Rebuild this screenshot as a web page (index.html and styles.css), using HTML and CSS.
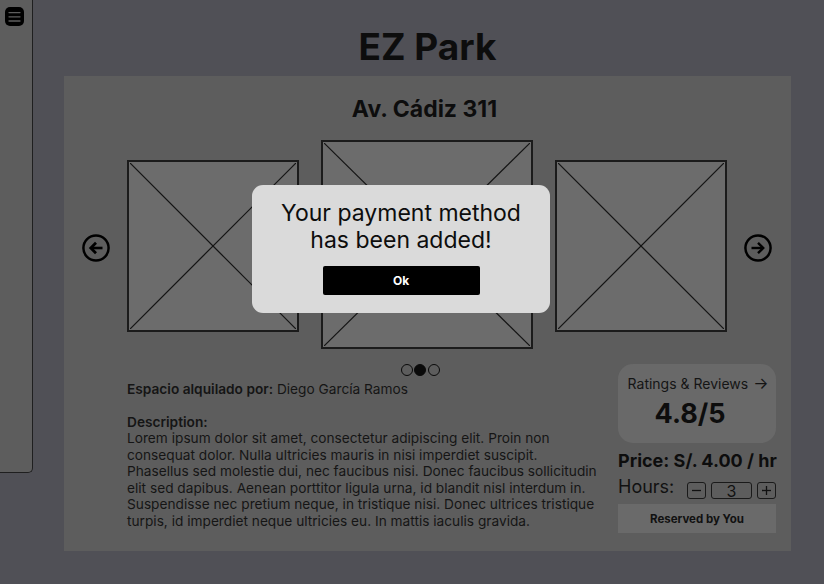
FILE: index.html
```html
<!DOCTYPE html>
<html lang="es">
<head>
<meta charset="utf-8">
<title>EZ Park</title>
<link rel="stylesheet" href="styles.css">
</head>
<body>
<div class="app">
  <aside class="sidebar">
    <button class="menu-btn" aria-label="Menu">
      <svg width="19" height="19" viewBox="0 0 19 19"><rect x="0" y="0" width="19" height="19" rx="5" fill="#000"/><g stroke="#5d5d5d" stroke-width="1.3" stroke-linecap="round"><line x1="4" y1="5.6" x2="15" y2="5.6"/><line x1="4" y1="9.8" x2="15" y2="9.8"/><line x1="4" y1="14" x2="15" y2="14"/></g></svg>
    </button>
  </aside>
  <main class="main">
    <h1 class="brand">EZ Park</h1>
    <section class="card">
      <h2 class="address">Av. Cádiz 311</h2>
      <div class="carousel">
        <button class="nav prev" aria-label="Anterior">
          <svg width="28" height="28" viewBox="0 0 28 28" fill="none" stroke="#000"><circle cx="14" cy="14" r="12.6" stroke-width="2.5"/><path d="M20.5 14H9" stroke-width="2.6"/><path d="M14 8.8L8.8 14L14 19.2" stroke-width="2.8" stroke-linejoin="miter"/></svg>
        </button>
        <div class="photo side"><svg viewBox="0 0 100 100" preserveAspectRatio="none"><line x1="0" y1="0" x2="100" y2="100"/><line x1="100" y1="0" x2="0" y2="100"/></svg></div>
        <div class="photo main-photo"><svg viewBox="0 0 100 100" preserveAspectRatio="none"><line x1="0" y1="0" x2="100" y2="100"/><line x1="100" y1="0" x2="0" y2="100"/></svg></div>
        <div class="photo side"><svg viewBox="0 0 100 100" preserveAspectRatio="none"><line x1="0" y1="0" x2="100" y2="100"/><line x1="100" y1="0" x2="0" y2="100"/></svg></div>
        <button class="nav next" aria-label="Siguiente">
          <svg width="28" height="28" viewBox="0 0 28 28" fill="none" stroke="#000"><circle cx="14" cy="14" r="12.6" stroke-width="2.5"/><path d="M7.5 14H19" stroke-width="2.4"/><path d="M14 8.8L19.2 14L14 19.2" stroke-width="2.4"/></svg>
        </button>
      </div>
      <div class="details">
        <div class="info">
          <div class="dots"><span class="dot"></span><span class="dot active"></span><span class="dot"></span></div>
          <p class="owner"><strong>Espacio alquilado por:</strong> Diego García Ramos</p>
          <h3 class="desc-title">Description:</h3>
          <p class="desc">Lorem ipsum dolor sit amet, consectetur adipiscing elit. Proin non consequat dolor. Nulla ultricies mauris in nisi imperdiet suscipit. Phasellus sed molestie dui, nec faucibus nisi. Donec faucibus sollicitudin elit sed dapibus. Aenean porttitor ligula urna, id blandit nisl interdum in. Suspendisse nec pretium neque, in tristique nisi. Donec ultrices tristique turpis, id imperdiet neque ultricies eu. In mattis iaculis gravida.</p>
        </div>
        <aside class="booking">
          <div class="ratings">
            <span class="ratings-label">Ratings &amp; Reviews <span class="arrow">→</span></span>
            <span class="ratings-value">4.8/5</span>
          </div>
          <p class="price">Price: S/. 4.00 / hr</p>
          <div class="hours">
            <span class="hours-label">Hours:</span>
            <div class="stepper">
              <button class="step" aria-label="Menos"><svg width="11" height="11" viewBox="0 0 11 11"><line x1="1" y1="5.5" x2="10" y2="5.5" stroke="#111" stroke-width="1.3"/></svg></button>
              <span class="qty">3</span>
              <button class="step" aria-label="Más"><svg width="11" height="11" viewBox="0 0 11 11"><line x1="1" y1="5.5" x2="10" y2="5.5" stroke="#111" stroke-width="1.3"/><line x1="5.5" y1="1" x2="5.5" y2="10" stroke="#111" stroke-width="1.3"/></svg></button>
            </div>
          </div>
          <div class="reserved">Reserved by You</div>
        </aside>
      </div>
    </section>
  </main>
</div>
<div class="modal" role="dialog">
  <p class="modal-text">Your payment method<br>has been added!</p>
  <button class="modal-btn">Ok</button>
</div>
</body>
</html>
```
FILE: styles.css
```css
* { box-sizing: border-box; }
html, body { margin: 0; padding: 0; }
body {
  background: #505056;
  font-family: Inter, "Noto Sans", sans-serif;
  color: #111;
  width: 824px;
  height: 584px;
  overflow: hidden;
  position: relative;
}
button { font-family: inherit; border: 0; background: none; padding: 0; cursor: pointer; }
p, h1, h2, h3 { margin: 0; }

.app { display: flex; align-items: flex-start; }

.sidebar {
  width: 33px;
  height: 473px;
  flex: none;
  background: #5d5d5d;
  border-right: 1px solid #1f1f1f;
  border-bottom: 1px solid #1f1f1f;
  border-bottom-right-radius: 5px;
  padding: 7px 0 0 5px;
}
.menu-btn { display: block; width: 19px; height: 19px; }
.menu-btn svg { display: block; }

.main { flex: 1; padding-right: 2px; }

.brand {
  font-size: 37px;
  font-weight: 700;
  line-height: 44px;
  text-align: center;
  margin-top: 25px;
  margin-bottom: 7px;
  color: #0d0d0d;
}

.card {
  width: 727px;
  margin: 0 auto;
  background: #5d5d5d;
  padding: 19px 0 18px;
}

.address {
  font-size: 23px;
  font-weight: 700;
  line-height: 28px;
  text-align: center;
  padding-right: 6px;
  color: #0d0d0d;
}

.carousel {
  display: flex;
  align-items: center;
  justify-content: center;
  margin-top: 17px;
  padding-right: 2px;
}
.nav { width: 28px; height: 28px; margin-top: 6px; }
.nav svg { display: block; }
.nav.prev { margin-right: 17px; }
.nav.next { margin-left: 17px; }

.photo {
  background: #6c6c6c;
  border: 2px solid #1b1b1b;
  padding: 1px;
}
.photo svg { display: block; width: 100%; height: 100%; }
.photo line { stroke: #141414; stroke-width: 1.2; vector-effect: non-scaling-stroke; }
.photo.side { width: 172px; height: 172px; margin-top: 2px; }
.photo.main-photo { width: 212px; height: 209px; margin: 0 22px; }

.details {
  display: flex;
  align-items: flex-start;
  gap: 17px;
  margin-top: 15px;
  padding-left: 63px;
}
.info { width: 474px; font-size: 13.7px; line-height: 16.5px; color: #151515; }
.dots {
  display: flex;
  justify-content: center;
  gap: 1.5px;
  padding-left: 112px;
  height: 12px;
}
.dot { width: 12px; height: 12px; border-radius: 50%; border: 1px solid #0a0a0a; }
.dot.active { background: #0a0a0a; }
.owner { margin-top: 5px; }
.owner strong { font-weight: 600; }
.desc-title { font-size: 13.7px; font-weight: 600; line-height: 16.5px; margin-top: 16px; }
.desc { margin: 0; }

.booking { width: 160px; display: flex; flex-direction: column; }
.ratings {
  width: 158px;
  height: 79px;
  background: #696969;
  border-radius: 15px;
  display: flex;
  flex-direction: column;
  align-items: center;
  padding-top: 11px;
  padding-left: 2px;
}
.ratings-label { font-size: 14px; line-height: 16px; color: #151515; white-space: nowrap; }
.ratings-label .arrow { font-size: 16px; margin-left: 1px; }
.ratings-value { font-size: 27px; font-weight: 700; line-height: 32px; margin-top: 6px; margin-right: 16px; color: #0d0d0d; }

.price { font-size: 18px; font-weight: 700; line-height: 22px; margin-top: 7px; white-space: nowrap; color: #0d0d0d; }

.hours { display: flex; align-items: flex-start; margin-top: 4px; height: 23px; }
.hours-label { font-size: 18px; line-height: 22px; width: 69px; color: #111; }
.stepper { display: flex; gap: 5px; margin-top: 6px; }
.step {
  width: 19px; height: 17px;
  border: 1.3px solid #1a1a1a;
  border-radius: 3px;
  display: flex; align-items: center; justify-content: center;
}
.step svg { display: block; }
.qty {
  width: 41px; height: 17px;
  border: 1.3px solid #1a1a1a;
  border-radius: 3px;
  font-size: 16px;
  line-height: 16px;
  text-align: center;
  color: #111;
}

.reserved {
  width: 158px;
  height: 29px;
  margin-top: 5px;
  background: #6a6a6a;
  display: flex; align-items: center; justify-content: center;
  font-size: 11.5px;
  font-weight: 700;
  color: #111;
}

.modal {
  position: absolute;
  left: 252px;
  top: 185px;
  width: 298px;
  height: 128px;
  background: #dadada;
  border-radius: 11px;
  display: flex;
  flex-direction: column;
  align-items: center;
  padding-top: 15px;
}
.modal-text { font-size: 23px; line-height: 27.3px; text-align: center; color: #0d0d0d; }
.modal-btn {
  margin-top: 11px;
  width: 157px;
  height: 29px;
  background: #000;
  color: #fff;
  border-radius: 2px;
  font-size: 12px;
  font-weight: 700;
}
```
